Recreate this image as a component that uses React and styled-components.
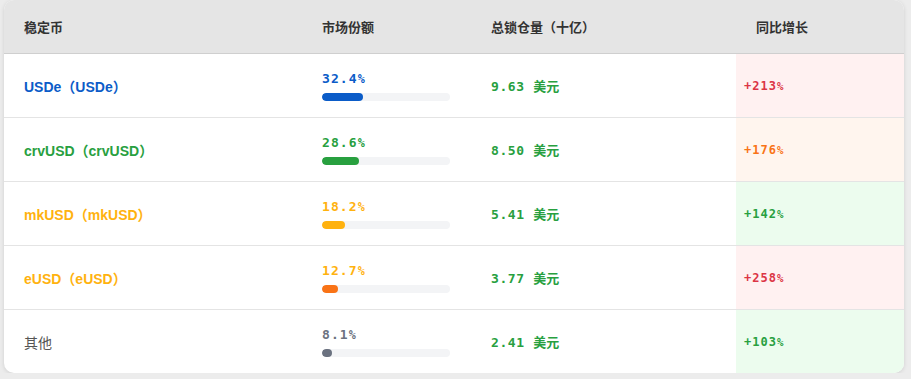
import React from "react";
import styled, { createGlobalStyle } from "styled-components";

const Global = createGlobalStyle`
  html, body { margin: 0; padding: 0; background: #ececec; }
  body { font-family: "Noto Sans CJK SC", "Noto Sans", sans-serif; }
`;

const Page = styled.div`
  padding: 0 7px 0 4px;
`;

const Card = styled.div`
  width: 900px;
  background: #fff;
  border-radius: 10px;
  overflow: hidden;
  box-shadow: 0 1px 4px rgba(0, 0, 0, 0.12);
`;

const cols = "298px 169px 265px 1fr";

const HeadRow = styled.div`
  display: grid;
  grid-template-columns: ${cols};
  height: 53px;
  background: #e5e5e5;
  border-bottom: 1px solid #cfcfcf;
`;

const HeadCell = styled.div`
  display: flex;
  align-items: center;
  padding-left: 20px;
  font-size: 13px;
  font-weight: 600;
  color: #333;
`;

const Row = styled.div`
  display: grid;
  grid-template-columns: ${cols};
  height: 63px;
  border-bottom: ${(p) => (p.$last ? "none" : "1px solid #e4e4e4")};
`;

const Cell = styled.div`
  display: flex;
  align-items: center;
  padding-left: 20px;
`;

const Name = styled.span`
  font-family: "Liberation Sans", "Noto Sans CJK SC", sans-serif;
  font-size: 14px;
  font-weight: ${(p) => (p.$plain ? 400 : 700)};
  color: ${(p) => p.$color};
`;

const Share = styled.div`
  display: flex;
  flex-direction: column;
  gap: 5px;
`;

const mono = `"DejaVu Sans Mono", "Liberation Mono", monospace`;

const ShareText = styled.span`
  font-family: ${mono};
  font-size: 13px;
  font-weight: 700;
  letter-spacing: 1.1px;
  line-height: 17px;
  color: ${(p) => p.$color};
`;

const Small = styled.span`
  font-size: 0.9em;
`;

const Track = styled.div`
  width: 128px;
  height: 8px;
  border-radius: 4px;
  background: #f3f4f6;
  overflow: hidden;
`;

const Fill = styled.div`
  height: 100%;
  border-radius: 4px;
  background: ${(p) => p.$color};
`;

const Tvl = styled.span`
  font-family: ${mono}, "Noto Sans CJK SC";
  font-size: 13px;
  font-weight: 700;
  letter-spacing: 0.6px;
  color: #28a03f;
`;

const Unit = styled.span`
  font-family: "Noto Sans CJK SC", sans-serif;
  letter-spacing: 0;
`;

const GrowthCell = styled.div`
  display: flex;
  align-items: center;
  padding-left: 8px;
  background: ${(p) => p.$bg};
`;

const Growth = styled.span`
  font-family: ${mono};
  font-size: 12px;
  font-weight: 700;
  letter-spacing: 1px;
  color: ${(p) => p.$color};
`;

const rows = [
  { name: "USDe（USDe）", color: "#0b5cc8", share: 32.4, shareColor: "#0b5cc8", bar: "#0b5cc8", tvl: "9.63", growth: "+213", gColor: "#dc3545", gBg: "#fff1f1" },
  { name: "crvUSD（crvUSD）", color: "#28a03f", share: 28.6, shareColor: "#28a03f", bar: "#28a03f", tvl: "8.50", growth: "+176", gColor: "#f97316", gBg: "#fff5ee" },
  { name: "mkUSD（mkUSD）", color: "#ffb20f", share: 18.2, shareColor: "#ffb20f", bar: "#ffb20f", tvl: "5.41", growth: "+142", gColor: "#28a03f", gBg: "#ecfcee" },
  { name: "eUSD（eUSD）", color: "#ffb20f", share: 12.7, shareColor: "#ffb20f", bar: "#f97316", tvl: "3.77", growth: "+258", gColor: "#dc3545", gBg: "#fff1f1" },
  { name: "其他", color: "#555", share: 8.1, shareColor: "#6b7280", bar: "#6b7280", tvl: "2.41", growth: "+103", gColor: "#28a03f", gBg: "#ecfcee", plain: true },
];

export default function App() {
  return (
    <>
      <Global />
      <Page>
        <Card>
          <HeadRow>
            <HeadCell>稳定币</HeadCell>
            <HeadCell>市场份额</HeadCell>
            <HeadCell>总锁仓量（十亿）</HeadCell>
            <HeadCell>同比增长</HeadCell>
          </HeadRow>
          {rows.map((r, i) => (
            <Row key={r.name} $last={i === rows.length - 1}>
              <Cell>
                <Name $color={r.color} $plain={r.plain}>{r.name}</Name>
              </Cell>
              <Cell>
                <Share>
                  <ShareText $color={r.shareColor}>
                    {r.share.toFixed(1)}
                    <Small>%</Small>
                  </ShareText>
                  <Track>
                    <Fill $color={r.bar} style={{ width: `${r.share}%` }} />
                  </Track>
                </Share>
              </Cell>
              <Cell>
                <Tvl>
                  {r.tvl} <Unit>美元</Unit>
                </Tvl>
              </Cell>
              <GrowthCell $bg={r.gBg}>
                <Growth $color={r.gColor}>
                  {r.growth}
                  <Small>%</Small>
                </Growth>
              </GrowthCell>
            </Row>
          ))}
        </Card>
      </Page>
    </>
  );
}
